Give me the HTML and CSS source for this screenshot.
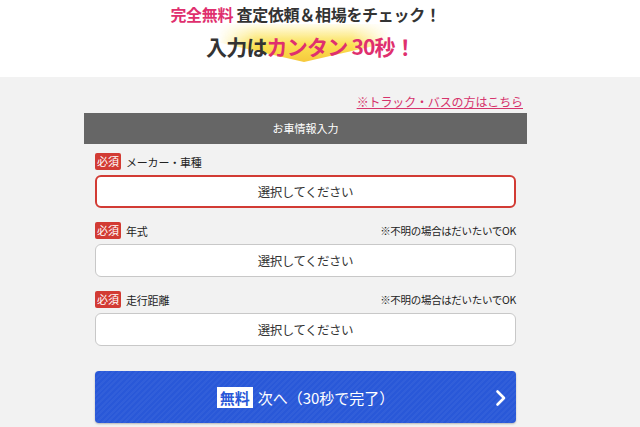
FILE: index.html
```html
<!DOCTYPE html>
<html lang="ja">
<head>
    <meta charset="UTF-8">
    <meta name="viewport" content="width=device-width, initial-scale=1.0">
    <title>お車情報入力</title>
    <link rel="stylesheet" href="styles.css">
</head>
<body>
    <header class="hero">
        <div class="hero-inner">
            <p class="hero-lead"><span class="pink">完全無料</span> 査定依頼＆相場をチェック！</p>
            <p class="hero-main">
                <span class="hero-arrow"></span>
                <span class="hero-text">入力は<span class="pink">カンタン</span> <span class="pink">30秒！</span></span>
            </p>
        </div>
    </header>

    <main class="content">
        <div class="truck-link"><a href="#">※トラック・バスの方はこちら</a></div>

        <section class="form-box">
            <h2 class="form-title">お車情報入力</h2>
            <form class="form-body">
                <div class="field">
                    <div class="field-head">
                        <span class="badge">必須</span>
                        <label class="field-label">メーカー・車種</label>
                    </div>
                    <div class="select active">選択してください</div>
                </div>

                <div class="field">
                    <div class="field-head">
                        <span class="badge">必須</span>
                        <label class="field-label">年式</label>
                        <span class="field-note">※不明の場合はだいたいでOK</span>
                    </div>
                    <div class="select">選択してください</div>
                </div>

                <div class="field">
                    <div class="field-head">
                        <span class="badge">必須</span>
                        <label class="field-label">走行距離</label>
                        <span class="field-note">※不明の場合はだいたいでOK</span>
                    </div>
                    <div class="select">選択してください</div>
                </div>

                <button type="button" class="next-btn">
                    <span class="free">無料</span>
                    <span>次へ（30秒で完了）</span>
                    <svg class="chevron" width="12" height="18" viewBox="0 0 12 18">
                        <path d="M2.5 2.5 L9 9 L2.5 15.5" fill="none" stroke="#fff" stroke-width="2.6" stroke-linecap="round" stroke-linejoin="round"/>
                    </svg>
                </button>
            </form>
        </section>
    </main>
</body>
</html>
```

FILE: styles.css
```css
* {
    margin: 0;
    padding: 0;
    box-sizing: border-box;
    font-family: 'Noto Sans CJK JP', 'Noto Sans', sans-serif;
}

body {
    background: #f2f2f2;
    color: #333;
    height: 427px;
    overflow: hidden;
}

.pink {
    color: #df2f6e;
}

.hero {
    background: #fff;
    height: 77px;
}

.hero-inner {
    width: 443px;
    margin-left: 84px;
    display: flex;
    flex-direction: column;
    align-items: center;
    padding-top: 3px;
}

.hero-lead {
    font-size: 16px;
    font-weight: 700;
    line-height: 22px;
    color: #333;
    letter-spacing: -0.3px;
}

.hero-main {
    position: relative;
    margin-top: 7px;
    font-size: 21px;
    font-weight: 700;
    line-height: 28px;
    color: #333;
    letter-spacing: -0.8px;
    padding-left: 10px;
}

.hero-text {
    position: relative;
}

.hero-arrow {
    position: absolute;
    left: 22px;
    top: -8px;
    width: 172px;
    height: 38px;
    background: linear-gradient(to bottom, rgba(255, 242, 160, 0.2), #fbe152 55%, #f6c83c);
    clip-path: polygon(0 0, 100% 0, 100% 48%, 50% 100%, 0 48%);
    -webkit-mask-image: linear-gradient(to right, transparent, #000 22%, #000 78%, transparent);
    mask-image: linear-gradient(to right, transparent, #000 22%, #000 78%, transparent);
}

.content {
    width: 443px;
    margin-left: 84px;
}

.truck-link {
    text-align: right;
    padding: 11px 4px 0 0;
    height: 36px;
}

.truck-link a {
    color: #d6336c;
    font-size: 12px;
    line-height: 20px;
    letter-spacing: -0.1px;
    text-decoration: underline;
}

.form-title {
    background: #666;
    color: #fff;
    font-size: 11px;
    font-weight: 400;
    text-align: center;
    height: 31px;
    line-height: 31px;
}

.form-body {
    padding: 9px 11px 0;
    display: flex;
    flex-direction: column;
}

.field {
    margin-bottom: 14px;
}

.field-head {
    display: flex;
    align-items: center;
    height: 17px;
    margin-bottom: 5px;
}

.badge {
    background: #d23b34;
    color: #fff;
    font-size: 11px;
    line-height: 17px;
    padding: 0 2px;
    border-radius: 2px;
}

.field-label {
    font-size: 11px;
    margin-left: 5px;
    color: #222;
    letter-spacing: -0.2px;
}

.field-note {
    margin-left: auto;
    font-size: 10.5px;
    color: #222;
    letter-spacing: -0.3px;
}

.select {
    background: #fff;
    border: 1px solid #c8c8c8;
    border-radius: 6px;
    height: 33px;
    line-height: 31px;
    text-align: center;
    font-size: 12.5px;
    letter-spacing: -0.5px;
    color: #333;
}

.select.active {
    border: 2px solid #d23b34;
    line-height: 29px;
}

.next-btn {
    margin-top: 11px;
    height: 52px;
    width: 100%;
    border: none;
    border-radius: 4px;
    background-color: #2958d8;
    background-image: repeating-linear-gradient(-45deg, rgba(255, 255, 255, 0.04) 0, rgba(255, 255, 255, 0.04) 2px, transparent 2px, transparent 4px);
    box-shadow: 0 1px 2px rgba(0, 0, 0, 0.25);
    color: #fff;
    font-size: 15px;
    display: flex;
    align-items: center;
    justify-content: center;
    gap: 5px;
    position: relative;
    cursor: pointer;
}

.free {
    background: #fff;
    color: #2958d8;
    font-weight: 700;
    padding: 0 3px;
    line-height: 21px;
}

.chevron {
    position: absolute;
    right: 9px;
    top: 18px;
}
```
